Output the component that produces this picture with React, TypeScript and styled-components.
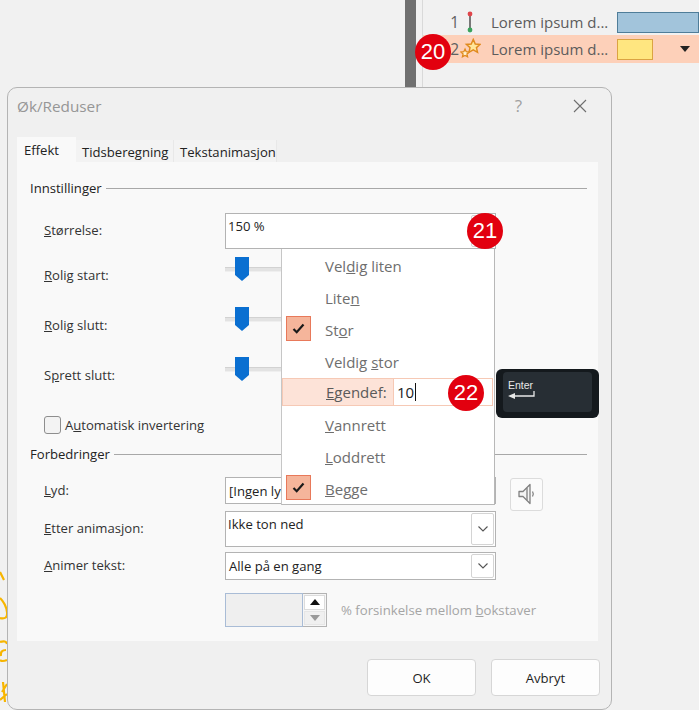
import React from 'react'
import styled, { createGlobalStyle } from 'styled-components'

const GlobalStyle = createGlobalStyle`
  html, body {
    margin: 0;
    padding: 0;
    background: #f1f1f1;
  }
  * {
    box-sizing: border-box;
  }
`

const FONT = `'Open Sans', 'Noto Sans', sans-serif`

const Key = ({ children }: { children: string }) => <u>{children}</u>

const StarsIcon = () => (
  <svg width='21' height='22' viewBox='0 0 23 24'>
    <path
      d='M14.5 1.5l2.2 5 5.3.5-4 3.5 1.2 5.2-4.7-2.7-4.7 2.7 1.2-5.2-4-3.5 5.3-.5z'
      fill='#ffe69a'
      stroke='#e08a1e'
      strokeWidth='1.6'
    />
    <path
      d='M5.5 12l1.3 3 3.2.3-2.4 2.1.7 3.2-2.8-1.6-2.8 1.6.7-3.2L1 15.3l3.2-.3z'
      fill='#fff3d0'
      stroke='#e08a1e'
      strokeWidth='1.4'
    />
  </svg>
)

const PinIcon = () => (
  <svg width='8' height='22' viewBox='0 0 8 22'>
    <line x1='4' y1='3' x2='4' y2='19' stroke='#444' strokeWidth='1.4' />
    <circle cx='4' cy='3' r='2.4' fill='#e0454a' />
    <circle cx='4' cy='19' r='2.4' fill='#3aa35c' />
  </svg>
)

const Chevron = () => (
  <svg width='12' height='8' viewBox='0 0 12 8'>
    <path d='M1.5 1.5L6 6l4.5-4.5' fill='none' stroke='#555' strokeWidth='1.1' />
  </svg>
)

const SpeakerIcon = () => (
  <svg width='18' height='24' viewBox='0 0 18 24'>
    <path
      d='M1 9.5h4L12 2.5v19L5 14.5H1z'
      fill='#f4f4f4'
      stroke='#808080'
      strokeWidth='1.3'
      strokeLinejoin='round'
    />
    <path d='M9 6v12M14.5 9.5q1.6 2.5 0 5' fill='none' stroke='#808080' strokeWidth='1.3' />
  </svg>
)

const CheckIcon = () => (
  <svg width='13' height='11' viewBox='0 0 13 11'>
    <path d='M1.5 6l3.2 3.2L11.5 1.5' fill='none' stroke='#1a1a1a' strokeWidth='2.2' />
  </svg>
)

const EnterArrow = () => (
  <svg width='27' height='8' viewBox='0 0 27 8'>
    <path d='M26 0v5H7' fill='none' stroke='#e8e8e8' strokeWidth='1.3' />
    <path d='M0 5l7-3v6z' fill='#e8e8e8' />
  </svg>
)

const Scribble = () => (
  <ScribbleSvg width='8' height='150' viewBox='0 0 8 150'>
    <path
      d='M0 12l4 8M0 38q6 6 7 14t-7 6M0 82q6-2 7 2M6 90q-6 0-5 6M7 100q-5 2-7 0M7 124l-5 8M7 134l-7 6M3 122l2 20'
      fill='none'
      stroke='#f7b500'
      strokeWidth='2.2'
    />
  </ScribbleSvg>
)

const menuItems = [
  { label: ['Vel', 'd', 'ig liten'] },
  { label: ['Lite', 'n', ''] },
  { label: ['St', 'o', 'r'], checked: true },
  { label: ['Veldig ', 's', 'tor'] },
]

const menuItemsAfter = [
  { label: ['', 'V', 'annrett'] },
  { label: ['', 'L', 'oddrett'] },
  { label: ['', 'B', 'egge'], checked: true },
]

const MenuRow = ({ label, checked }: { label: string[]; checked?: boolean }) => (
  <MenuItem>
    {checked && (
      <CheckBox>
        <CheckIcon />
      </CheckBox>
    )}
    <MenuText>
      {label[0]}
      <Key>{label[1]}</Key>
      {label[2]}
    </MenuText>
  </MenuItem>
)

const SliderRow = ({ label }: { label: React.ReactNode }) => (
  <SlideLine>
    <FieldLabel>{label}</FieldLabel>
    <SliderTrack>
      <SliderThumb viewBox='0 0 14 26' width='14' height='26'>
        <path d='M0 1h14v18l-7 6-7-6z' fill='#0a6fd1' />
      </SliderThumb>
    </SliderTrack>
  </SlideLine>
)

const App = () => {
  return (
    <Page>
      <GlobalStyle />
      <Backdrop>
        <LeftPane />
        <Rail />
        <AnimationPane>
          <ListRow>
            <RowNumber>1</RowNumber>
            <IconSlot>
              <PinIcon />
            </IconSlot>
            <RowText>Lorem ipsum d...</RowText>
            <TimeBar $width={82} $fill='#a2c4db' $line='#4f7d99' />
          </ListRow>
          <ListRow $active>
            <RowNumber>2</RowNumber>
            <IconSlot>
              <StarsIcon />
            </IconSlot>
            <RowText>Lorem ipsum d...</RowText>
            <TimeBar $width={36} $fill='#ffe680' $line='#dba342' />
            <RowCaret />
          </ListRow>
        </AnimationPane>
      </Backdrop>

      <Scribble />

      <Dialog>
        <TitleBar>
          <DialogTitle>Øk/Reduser</DialogTitle>
          <TitleButtons>
            <HelpMark>?</HelpMark>
            <svg width='14' height='14' viewBox='0 0 14 14'>
              <path d='M1 1l12 12M13 1L1 13' stroke='#6e6e6e' strokeWidth='1.1' />
            </svg>
          </TitleButtons>
        </TitleBar>

        <TabStrip>
          <Tab $active $width={59}>Effekt</Tab>
          <Tab $width={98}>Tidsberegning</Tab>
          <Tab $width={103}>Tekstanimasjon</Tab>
        </TabStrip>

        <Panel>
          <GroupHeader>
            <span>Innstillinger</span>
          </GroupHeader>

          <FormLine $height={36} $top={15}>
            <FieldLabel>
              <Key>S</Key>tørrelse:
            </FieldLabel>
            <Field $width={271}>
              <FieldValue $top>150 %</FieldValue>
              <DropButton />
            </Field>
          </FormLine>

          <SliderRow
            label={
              <>
                <Key>R</Key>olig start:
              </>
            }
          />
          <SliderRow
            label={
              <>
                <Key>R</Key>olig slutt:
              </>
            }
          />
          <SliderRow
            label={
              <>
                S<Key>p</Key>rett slutt:
              </>
            }
          />

          <CheckLine>
            <CheckInput />
            <CheckLabel>
              A<Key>u</Key>tomatisk invertering
            </CheckLabel>
          </CheckLine>

          <GroupHeader>
            <span>Forbedringer</span>
          </GroupHeader>

          <FormLine $height={27} $top={13}>
            <FieldLabel>
              <Key>L</Key>yd:
            </FieldLabel>
            <Field $width={271}>
              <FieldValue>[Ingen lyd]</FieldValue>
            </Field>
            <SoundButton>
              <SpeakerIcon />
            </SoundButton>
          </FormLine>

          <FormLine $height={36} $top={7}>
            <FieldLabel>
              <Key>E</Key>tter animasjon:
            </FieldLabel>
            <Field $width={271}>
              <FieldValue $top>Ikke ton ned</FieldValue>
              <DropButton>
                <Chevron />
              </DropButton>
            </Field>
          </FormLine>

          <FormLine $height={28} $top={5}>
            <FieldLabel>
              <Key>A</Key>nimer tekst:
            </FieldLabel>
            <Field $width={271}>
              <FieldValue>Alle på en gang</FieldValue>
              <DropButton>
                <Chevron />
              </DropButton>
            </Field>
          </FormLine>

          <FormLine $height={34} $top={13}>
            <FieldLabel />
            <Spinner>
              <SpinnerValue />
              <SpinnerButtons>
                <SpinButton>
                  <SpinTriangle $up />
                </SpinButton>
                <SpinButton $disabled>
                  <SpinTriangle />
                </SpinButton>
              </SpinnerButtons>
            </Spinner>
            <DisabledText>
              % forsinkelse mellom <Key>b</Key>okstaver
            </DisabledText>
          </FormLine>
        </Panel>

        <Footer>
          <DialogButton>OK</DialogButton>
          <DialogButton>Avbryt</DialogButton>
        </Footer>
      </Dialog>

      <Menu>
        {menuItems.map((item) => (
          <MenuRow key={item.label.join('')} label={item.label} checked={item.checked} />
        ))}
        <CustomRow>
          <CustomLabel>
            <Key>E</Key>gendef:
          </CustomLabel>
          <CustomInput>
            10
            <Caret />
          </CustomInput>
        </CustomRow>
        {menuItemsAfter.map((item) => (
          <MenuRow key={item.label.join('')} label={item.label} checked={item.checked} />
        ))}
      </Menu>

      <EnterKey>
        <EnterFace>
          <EnterText>Enter</EnterText>
          <EnterArrow />
        </EnterFace>
      </EnterKey>

      <Badge $x={415} $y={34}>20</Badge>
      <Badge $x={467} $y={213}>21</Badge>
      <Badge $x={448} $y={375}>22</Badge>
    </Page>
  )
}

const Page = styled.div`
  position: relative;
  width: 699px;
  height: 710px;
  overflow: hidden;
  background: #f1f1f1;
  font-family: ${FONT};
`

const Backdrop = styled.div`
  display: flex;
  height: 100%;
`

const LeftPane = styled.div`
  width: 405px;
`

const Rail = styled.div`
  width: 11px;
  background: #707070;
`

const AnimationPane = styled.div`
  flex: 1;
  margin-left: 6px;
  padding-top: 9px;
  border-left: 1px solid #d9d9d9;
`

const ListRow = styled.div<{ $active?: boolean }>`
  display: flex;
  align-items: center;
  height: ${(props) => (props.$active ? '28px' : '26px')};
  padding-left: 26px;
  background: ${(props) => (props.$active ? '#fdd0b9' : 'transparent')};
`

const RowNumber = styled.span`
  width: 10px;
  font-size: 15.5px;
  color: #606060;
  text-align: right;
`

const IconSlot = styled.div`
  display: flex;
  justify-content: center;
  width: 24px;
  margin-left: -1px;
  margin-right: 9px;
`

const RowText = styled.span`
  width: 126px;
  font-size: 15px;
  white-space: nowrap;
  color: #5c5c5c;
`

const TimeBar = styled.div<{ $width: number; $fill: string; $line: string }>`
  width: ${(props) => props.$width}px;
  height: 21px;
  background: ${(props) => props.$fill};
  border: 1.5px solid ${(props) => props.$line};
`

const RowCaret = styled.div`
  margin-left: 27px;
  border-top: 6px solid #222;
  border-left: 5.5px solid transparent;
  border-right: 5.5px solid transparent;
`

const ScribbleSvg = styled.svg`
  position: absolute;
  left: 0;
  top: 560px;
`

const Dialog = styled.div`
  position: absolute;
  left: 7px;
  top: 87px;
  display: flex;
  flex-direction: column;
  width: 605px;
  height: 623px;
  padding: 0 13px 0 9px;
  background: #f0f0f0;
  border: 1.5px solid #b4b4b4;
  border-radius: 10px;
`

const TitleBar = styled.div`
  display: flex;
  align-items: center;
  justify-content: space-between;
  height: 35px;
  margin-bottom: 13px;
  flex-shrink: 0;
`

const DialogTitle = styled.div`
  font-size: 15.3px;
  color: #969696;
`

const TitleButtons = styled.div`
  display: flex;
  align-items: center;
  gap: 51px;
  padding-right: 11px;
`

const HelpMark = styled.span`
  font-size: 17px;
  color: #a0a0a0;
`

const TabStrip = styled.div`
  display: flex;
  align-items: flex-end;
  height: 26px;
  flex-shrink: 0;
`

const Tab = styled.div<{ $active?: boolean; $width: number }>`
  display: flex;
  align-items: center;
  width: ${(props) => props.$width}px;
  height: ${(props) => (props.$active ? '25px' : '22px')};
  padding: ${(props) => (props.$active ? '0' : '1px')} 0 0 ${(props) => (props.$active ? '7px' : '6px')};
  font-size: 13.1px;
  color: #222;
  background: ${(props) => (props.$active ? '#f9f9f9' : '#f3f3f3')};
  border-right: 1px solid ${(props) => (props.$active ? '#f9f9f9' : '#e8e8e8')};
`

const Panel = styled.div`
  width: 581px;
  height: 479px;
  padding: 16px 0 0 27px;
  background: #f9f9f9;
  flex-shrink: 0;
`

const GroupHeader = styled.div`
  display: flex;
  align-items: center;
  gap: 4px;
  height: 20px;
  margin-left: -14px;
  margin-right: 11px;
  font-size: 13.1px;
  color: #222;

  &::after {
    content: '';
    flex: 1;
    height: 1px;
    background: #a8a8a8;
  }
`

const FormLine = styled.div<{ $height: number; $top: number }>`
  display: flex;
  align-items: center;
  height: ${(props) => props.$height}px;
  margin-top: ${(props) => props.$top}px;
`

const FieldLabel = styled.div`
  flex-shrink: 0;
  width: 181px;
  padding-bottom: 2px;
  font-size: 13.1px;
  color: #333;
  white-space: nowrap;
`

const CheckLabel = styled(FieldLabel)`
  padding-bottom: 0;
`

const Field = styled.div<{ $width: number }>`
  position: relative;
  display: flex;
  justify-content: space-between;
  width: ${(props) => props.$width}px;
  height: 100%;
  padding: 1px;
  background: #fff;
  border: 1px solid #b3b3b3;
  flex-shrink: 0;
`

const FieldValue = styled.div<{ $top?: boolean }>`
  align-self: ${(props) => (props.$top ? 'flex-start' : 'center')};
  padding: ${(props) => (props.$top ? '2px 0 0 1px' : '0 0 0 2px')};
  font-size: 13.1px;
  color: #222;
  white-space: nowrap;
`

const DropButton = styled.div`
  display: flex;
  align-items: center;
  justify-content: center;
  width: 23px;
  height: 100%;
  background: #fff;
  border: 1px solid #d4d4d4;
  border-radius: 2px;
`

const SoundButton = styled.div`
  display: flex;
  align-items: center;
  justify-content: center;
  width: 33px;
  height: 33px;
  margin-left: 14px;
  margin-top: 7px;
  background: #fbfbfb;
  border: 1px solid #dcdcdc;
  border-radius: 3px;
`

const SlideLine = styled.div`
  display: flex;
  align-items: center;
  height: 50px;
  padding-top: 1px;

  &:nth-of-type(3) {
    margin-top: 1px;
  }
`

const SliderTrack = styled.div`
  position: relative;
  width: 56px;
  height: 5px;
  margin-top: -13px;
  background: #e3e3e3;
  border-top: 1px solid #d2d2d2;
  border-bottom: 1px solid #efefef;
`

const SliderThumb = styled.svg`
  position: absolute;
  left: 10px;
  top: -12px;
`

const CheckLine = styled.div`
  display: flex;
  align-items: center;
  gap: 4px;
  height: 44px;
  padding-top: 6px;
`

const CheckInput = styled.div`
  width: 17px;
  height: 18px;
  background: #f3f3f3;
  border: 1px solid #8e8e8e;
  border-radius: 3px;
  flex-shrink: 0;
`

const Spinner = styled.div`
  display: flex;
  width: 102px;
  height: 100%;
  border: 1px solid #b3b3b3;
  flex-shrink: 0;
`

const SpinnerValue = styled.div`
  flex: 1;
  background: #efefef;
  border: 1px solid #a9bcd6;
  margin: -1px 0 -1px -1px;
`

const SpinnerButtons = styled.div`
  display: flex;
  flex-direction: column;
  justify-content: center;
  gap: 1px;
  width: 23px;
  padding: 1px;
  background: #f6f6f6;
`

const SpinButton = styled.div<{ $disabled?: boolean }>`
  display: flex;
  align-items: center;
  justify-content: center;
  flex: 1;
  background: ${(props) => (props.$disabled ? '#f0f0f0' : '#fff')};
  border: 1px solid ${(props) => (props.$disabled ? '#e6e6e6' : '#dcdcdc')};
`

const SpinTriangle = styled.div<{ $up?: boolean }>`
  border-left: 5px solid transparent;
  border-right: 5px solid transparent;
  border-bottom: ${(props) => (props.$up ? '6px solid #111' : 'none')};
  border-top: ${(props) => (props.$up ? 'none' : '6px solid #999')};
`

const DisabledText = styled.div`
  margin-left: 14px;
  font-size: 13.2px;
  color: #a5a5a5;
  white-space: nowrap;
`

const Footer = styled.div`
  display: flex;
  justify-content: flex-end;
  gap: 15px;
  margin-top: 18px;
  margin-right: -2px;
`

const DialogButton = styled.div`
  display: flex;
  align-items: center;
  justify-content: center;
  width: 109px;
  height: 37px;
  font-size: 13.1px;
  color: #1e1e1e;
  background: #fdfdfd;
  border: 1px solid #d6d6d6;
  border-radius: 4px;
`

const Menu = styled.div`
  position: absolute;
  left: 281px;
  top: 249px;
  width: 214px;
  height: 256px;
  padding-top: 1px;
  background: #fff;
  border-left: 1px solid #c6c6c6;
  border-right: 1px solid #b8b8b8;
  border-bottom: 1px solid #b8b8b8;
`

const MenuItem = styled.div`
  position: relative;
  display: flex;
  align-items: center;
  height: 32px;
  padding-left: 43px;
`

const MenuText = styled.span`
  font-size: 15px;
  color: #6e6e6e;
  white-space: nowrap;
`

const CheckBox = styled.div`
  position: absolute;
  left: 4px;
  top: 2px;
  display: flex;
  align-items: center;
  justify-content: center;
  width: 25px;
  height: 25px;
  background: #f5b59b;
  border: 1px solid #e8795a;
`

const CustomRow = styled.div`
  display: flex;
  align-items: stretch;
  height: 28px;
  margin-bottom: 3px;
  width: 211px;
  padding-left: 1px;
  background: #fde3d8;
  border: 1px solid #f6c9b5;
`

const CustomLabel = styled.div`
  display: flex;
  align-items: center;
  width: 109px;
  padding-left: 42px;
  font-size: 15px;
  color: #5a5a5a;
  white-space: nowrap;
`

const CustomInput = styled.div`
  flex: 1;
  display: flex;
  align-items: center;
  padding-left: 3px;
  font-size: 15px;
  color: #222;
  background: #fff;
  border-left: 1px solid #f6c9b5;
`

const Caret = styled.span`
  width: 1px;
  height: 18px;
  margin-left: 1px;
  background: #111;
`

const EnterKey = styled.div`
  position: absolute;
  left: 496px;
  top: 369px;
  width: 103px;
  height: 49px;
  padding: 3px 7px 6px;
  background: #14191d;
  border-radius: 6px;
`

const EnterFace = styled.div`
  display: flex;
  flex-direction: column;
  height: 100%;
  padding: 7px 0 0 5px;
  background: #272e34;
  border-radius: 4px;
`

const EnterText = styled.span`
  font-family: 'Liberation Sans', Arial, sans-serif;
  font-size: 10.5px;
  line-height: 12px;
  color: #e8e8e8;
`

const Badge = styled.div<{ $x: number; $y: number }>`
  position: absolute;
  left: ${(props) => props.$x}px;
  top: ${(props) => props.$y}px;
  display: flex;
  align-items: center;
  justify-content: center;
  width: 36px;
  height: 36px;
  font-family: 'Liberation Sans', Arial, sans-serif;
  font-size: 22px;
  color: #fff;
  background: #e2000f;
  border-radius: 50%;
`

export default App
